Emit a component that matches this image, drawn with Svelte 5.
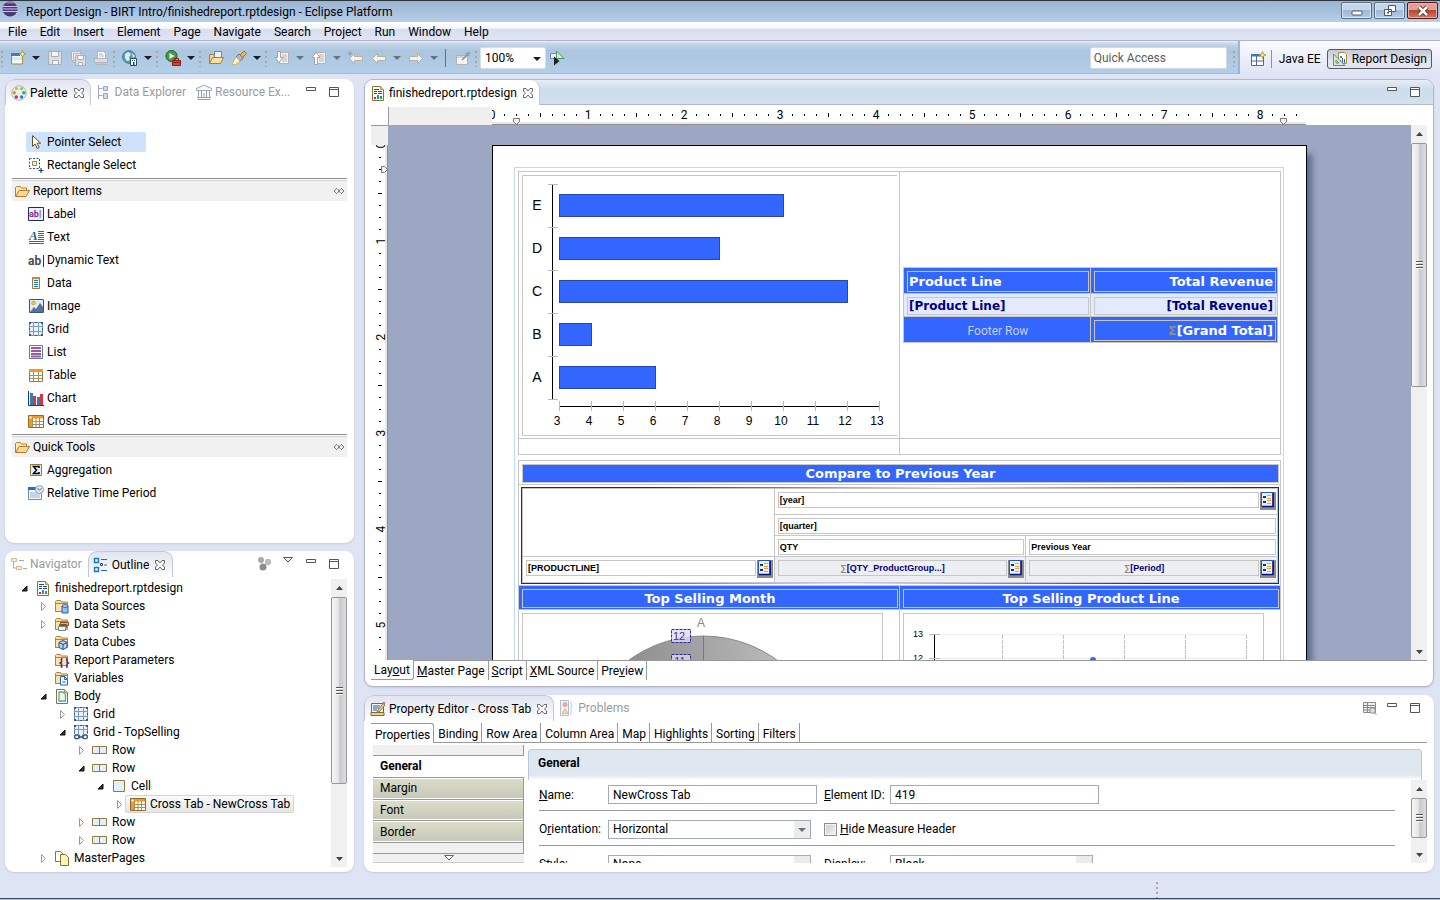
<script>
  const menus = ['File', 'Edit', 'Insert', 'Element', 'Page', 'Navigate', 'Search', 'Project', 'Run', 'Window', 'Help'];

  // kind: i = button, d = button with drop-down arrow, g = grip, s = separator
  const tools = [
    ['g'], ['d', 'new'], ['i', 'save'], ['i', 'saveall'], ['i', 'print'],
    ['g'], ['d', 'globe'],
    ['g'], ['d', 'run'],
    ['g'], ['i', 'openfolder'], ['d', 'torch'],
    ['g'], ['d', 'nextnote', true], ['d', 'prevnote', true], ['i', 'lastedit'],
    ['d', 'back', true], ['d', 'forward', true],
    ['s'], ['i', 'pin'], ['g']
  ];

  const reportItems = [
    ['label', 'Label'], ['text', 'Text'], ['dyntext', 'Dynamic Text'], ['data', 'Data'],
    ['image', 'Image'], ['grid', 'Grid'], ['list', 'List'], ['table', 'Table'],
    ['chart', 'Chart'], ['crosstab', 'Cross Tab']
  ];
  const quickTools = [['sigma', 'Aggregation'], ['time', 'Relative Time Period']];

  // depth, state, icon, label
  const tree = [
    [0, 'open', 'report', 'finishedreport.rptdesign'],
    [1, 'closed', 'dsource', 'Data Sources'],
    [1, 'closed', 'dset', 'Data Sets'],
    [1, '', 'dcube', 'Data Cubes'],
    [1, '', 'params', 'Report Parameters'],
    [1, '', 'vars', 'Variables'],
    [1, 'open', 'body', 'Body'],
    [2, 'closed', 'grid', 'Grid'],
    [2, 'open', 'gridlink', 'Grid - TopSelling'],
    [3, 'closed', 'row', 'Row'],
    [3, 'open', 'row', 'Row'],
    [4, 'open', 'cell', 'Cell'],
    [5, 'closed', 'crosstab', 'Cross Tab - NewCross Tab'],
    [3, 'closed', 'row', 'Row'],
    [3, 'closed', 'row', 'Row'],
    [1, 'closed', 'pages', 'MasterPages']
  ];
  const selectedRow = 12;

  const bars = [
    { name: 'E', value: 10 },
    { name: 'D', value: 8 },
    { name: 'C', value: 12 },
    { name: 'B', value: 4 },
    { name: 'A', value: 6 }
  ];
  const axis = [3, 4, 5, 6, 7, 8, 9, 10, 11, 12, 13];
  const hTicks = Array.from({ length: 68 }, (_, i) => i);
  const vTicks = Array.from({ length: 44 }, (_, i) => i);

  const editorTabs = [['Lay', 'o', 'ut'], ['', 'M', 'aster Page'], ['', 'S', 'cript'], ['', 'X', 'ML Source'], ['Pre', 'v', 'iew']];
  const propTabs = ['Properties', 'Binding', 'Row Area', 'Column Area', 'Map', 'Highlights', 'Sorting', 'Filters'];
  const categories = ['General', 'Margin', 'Font', 'Border'];
</script>

{#snippet folder()}
  <path d="M1.5 13V3.5l1-1h4l1 1.5h6v3" fill="#f6dfa4" stroke="#b5813a" />
  <path d="M1.5 13.5V5.5h12v8z" fill="#fbe3a6" stroke="#b5813a" />
{/snippet}

{#snippet sheet()}
  <path d="M2.5 1.5h8l3 3v11h-11z" fill="#fff" stroke="#8a7434" />
  <path d="M10.5 1.5v3h3" fill="#f0d58c" stroke="#b59445" />
{/snippet}

{#snippet gridShape()}
  <rect x="1.5" y="1.5" width="13" height="13" fill="#e8f1f8" stroke="#6f91b3" />
  <path d="M5.5 2v12M10.5 2v12M2 5.500h12M2 10.500h12" stroke="#7c9bb8" fill="none" />
  <path d="M1 1h2v2H1zM13 1h2v2h-2zM1 13h2v2H1zM13 13h2v2h-2zM1 7h1v2H1zM14 7h1v2h-1zM7 1h2v1H7zM7 14h2v1H7z" fill="#3b5678" />
{/snippet}

{#snippet icon(name)}
  <svg class="icon" width="16" height="16" viewBox="0 0 16 16" aria-hidden="true">
    {#if name === 'new'}
      <path d="M1.5 4.500h11v9.500h-11z" fill="#f4faff" stroke="#a98b3c" />
      <path d="M1 3h9v3H1z" fill="#3f7cc0" /><path d="M2 7h10v3H2z" fill="#d6e9f8" />
      <path d="M12.500.5l1 2.500 2.500 1-2.500 1-1 2.500-1-2.500-2.500-1 2.500-1z" fill="#fff3b0" stroke="#b38a1f" stroke-width=".8" />
    {:else if name === 'save'}
      <path d="M1.500 1.500h13v13h-13z" fill="#dddfe1" stroke="#a9aeb3" /><path d="M4.500 1.500h7v5h-7zM5.500 10.500h6v4h-6z" fill="#f6f6f6" stroke="#a9aeb3" />
    {:else if name === 'saveall'}
      <path d="M1.500 1.500h9v9h-9zM3.500 3.500h9v9h-9z" fill="#eceded" stroke="#b3b7bb" />
      <path d="M5.500 5.500h10v10h-10z" fill="#dddfe1" stroke="#a9aeb3" /><path d="M7.500 5.500h6v4h-6zM8.500 12.500h4v3h-4z" fill="#f6f6f6" stroke="#a9aeb3" />
    {:else if name === 'print'}
      <path d="M4.500 8V1.500h6l2 2V8" fill="#fbfbfb" stroke="#b3b7bb" />
      <path d="M1.500 8.500h13v4h-13z" fill="#dcdddd" stroke="#b3b7bb" />
      <path d="M2 14.500h12M6 4h4M6 6h5" stroke="#b3b7bb" />
    {:else if name === 'globe'}
      <circle cx="7" cy="7" r="6.300" fill="#5b9bd0" stroke="#3f6d9c" />
      <path d="M3 4l3-2 3 2-2 3 1 3-3 1-2-3zM10 3l3 3-2 2z" fill="#e5f0d2" />
      <path d="M8.500 8.500h6v7h-6z" fill="#fff" stroke="#28466e" /><path d="M10 10h1v1h-1zM12 10h1v1h-1zM11 12h1.500v3.500H11z" fill="#28466e" />
    {:else if name === 'run'}
      <circle cx="6.500" cy="6" r="5.600" fill="#3c9b46" stroke="#1f6b2a" />
      <path d="M4.500 3l5 3-5 3z" fill="#fff" />
      <path d="M7.500 10.500h8v5h-8z" fill="#d2453b" stroke="#8c1d18" /><path d="M9.500 10V8.500h4V10M7 12.500h9" fill="none" stroke="#8c1d18" />
    {:else if name === 'openfolder'}
      <path d="M1.500 13.500v-9h4l1 1.500h6v3" fill="#f7d991" stroke="#b07a28" />
      <path d="M6.500 1.500h7v6h-7z" fill="#eef4fb" stroke="#6d86ad" />
      <path d="M1.500 13.500l3-6h11l-3 6z" fill="#fbdf9c" stroke="#b07a28" />
    {:else if name === 'torch'}
      <path d="M9 5l4-4 2.500 2.500L11 8z" fill="#f5b640" stroke="#a86b1b" />
      <path d="M5 7l3-3 4.500 4L9 11z" fill="#b5b2c4" stroke="#77738d" />
      <path d="M1 14l4-7 4 4-5 4z" fill="#fff8c8" stroke="#d5b24a" />
    {:else if name === 'nextnote' || name === 'prevnote'}
      <path d="M5.500 2.500h9v11h-9z" fill="#f3f3f3" stroke="#b4b4b4" />
      <path d="M8 5h5M8 7h5M8 9h5M8 11h5" stroke="#b9b9b9" />
      {#if name === 'nextnote'}
        <path d="M3.500 1.500h3v6h2.500L5 12.500 1 7.500h2.500z" fill="#fff" stroke="#a3a3a3" />
      {:else}
        <path d="M3.500 14.500h3v-7h2.500L5 2.500 1 7.500h2.500z" fill="#fff" stroke="#a3a3a3" />
      {/if}
    {:else if name === 'back' || name === 'lastedit'}
      <path d="M1.500 8.500l5-5v3h8v4h-8v3z" fill="#f6f3ea" stroke="#b5b1a6" />
      {#if name === 'lastedit'}<path d="M2 1v5M0 3.500h4M.5 2l3 3M3.500 2l-3 3" stroke="#9d9d9d" stroke-width=".8" />{/if}
    {:else if name === 'forward'}
      <path d="M14.500 8.500l-5-5v3h-8v4h8v3z" fill="#f6f3ea" stroke="#b5b1a6" />
    {:else if name === 'pin'}
      <path d="M1.500 5.500h11v9h-11z" fill="#f5f5f3" stroke="#b3b3ae" /><path d="M2 6h10v2H2z" fill="#d4d6d6" />
      <path d="M7 10l6-6M11 3l3 3M13 2l2 2" stroke="#8d9892" stroke-width="1.600" />
    {:else if name === 'go'}
      <path d="M1.500 3.500h7v5h-7z" fill="#e9eefa" stroke="#7b86b8" />
      <path d="M7.500 1l7.500 7.500h-7.500z" fill="#d3ecd6" stroke="#4e9a5a" /><path d="M5 6.500l5.500 4.500L5 15.500z" fill="#222" />
    {:else if name === 'perspective'}
      <path d="M1.500 3.500h12v11h-12z" fill="#fff" stroke="#4d6d8f" /><path d="M1 3h10v2.500H1z" fill="#3b78b8" />
      <path d="M6.500 5v10M2 10h12" stroke="#4d6d8f" /><path d="M12.500.5l1 2.500 2.500 1-2.500 1-1 2.500-1-2.500-2.500-1 2.500-1z" fill="#ffe79a" stroke="#b38a1f" stroke-width=".8" />
    {:else if name === 'birt'}
      <path d="M6.500 1.500h6l2 2v9h-8z" fill="#fff" stroke="#b08c35" /><path d="M8 5h2v2H8z" fill="#3a86c8" /><path d="M8 9h1v3H8z" fill="#cc2b3c" /><path d="M10 7h1v5h-1zM12 8h1v4h-1z" fill="#2a6fb4" />
      <path d="M1.500 3v11.500H13zM4 9v3h3z" fill="#d9e8d4" fill-rule="evenodd" stroke="#6c8c74" />
    {:else if name === 'report'}
      {@render sheet()}
      <path d="M4 4.500h5M4 6.500h3M8 6.500h4M4 8.500h3M8 8.500h4" stroke="#174a8c" /><path d="M4 12h2v2H4z" fill="#d8233b" /><path d="M7 10h2v4H7z" fill="#2e86c8" /><path d="M10 11h2v3h-2z" fill="#2b9c55" />
    {:else if name === 'palette'}
      <circle cx="8" cy="8" r="7.300" fill="#e6eef8" stroke="#a8b7cd" />
      <circle cx="5.500" cy="3.600" r="1.700" fill="#f0b51e" /><circle cx="10.500" cy="3.600" r="1.700" fill="#9ccc3c" /><circle cx="3.200" cy="7.800" r="1.700" fill="#ef8b1e" />
      <circle cx="12.800" cy="7.800" r="1.700" fill="#48a846" /><circle cx="5.300" cy="12" r="1.700" fill="#d3332f" /><circle cx="10.600" cy="12" r="1.700" fill="#3b6fcb" />
    {:else if name === 'explorer'}
      <path d="M2.500 1v14M2.500 4.500h4M2.500 11.500h4" fill="none" stroke="#a4abb8" /><path d="M7.500 2.500h4v4h-4zM7.500 9.500h4v5h-4z" fill="#cfdcf2" stroke="#8ea6d2" />
    {:else if name === 'library'}
      <path d="M.5 6.500v-2L8 1l7.500 3.500v2z" fill="#f4f7fa" stroke="#9aa8b8" /><path d="M1.500 15.500h13M2.500 7v7M5.500 7v7M8 9v5M10.500 7v7M13.500 7v7M1 13.500h14" fill="none" stroke="#8fa0b3" />
    {:else if name === 'navigator'}
      <path d="M.5 2.500h5v3h-5zM5.500 10.500h5v3h-5z" fill="#fbe9cf" stroke="#dcb98b" /><path d="M2.500 6v6h3M8 4.500h5M12 12.500h4" fill="none" stroke="#8fb1cf" />
    {:else if name === 'outline'}
      <path d="M1.500 1.500h4v4h-4zM1.500 10.500h4v4h-4z" fill="#d9eefb" stroke="#1f77b8" stroke-width="1.400" /><path d="M8 2.500h6M8 13.500h6M11 8h3" stroke="#2b6ca8" /><path d="M7.500 6.500h2v2h-2z" fill="#fff" stroke="#1f4f86" />
    {:else if name === 'propedit'}
      <path d="M1.500 2.500h12v11h-12z" fill="#eef5fb" stroke="#7d6a35" /><path d="M3 5h7M3 7h6M3 9h4" stroke="#2e5f94" /><path d="M1 11.500h13v3H1z" fill="#e8cf8c" stroke="#7d6a35" /><path d="M7 10.500l6-8 2 1.500-6 7z" fill="#f4d183" stroke="#8a5b1d" stroke-width=".8" /><circle cx="14" cy="2" r="1.300" fill="#d9727a" />
    {:else if name === 'problems'}
      <path d="M1.500.5h8v15h-8z" fill="#f0f4fb" stroke="#aebfdd" /><circle cx="6" cy="4.500" r="2.500" fill="#f1a3a5" /><path d="M6 8.500l3 5H3z" fill="#f8d79d" stroke="#e8bb76" /><path d="M12.500 1.500l-1 2 1.500 2-1.500 3 1 3-1 3" fill="none" stroke="#b9c8e2" />
    {:else if name === 'pointer'}
      <path d="M4.500 1.500v11l2.700-2.500 2 4.500 2-1-2-4.300h3.500z" fill="#fff9e2" stroke="#5c5236" />
    {:else if name === 'rectselect'}
      <path d="M1.500 1.500h10v10h-10z" fill="none" stroke="#2f4f7f" stroke-dasharray="2 1.500" /><path d="M4.500 4.500h4v4h-4z" fill="#eef3e0" stroke="#8b8b4c" /><path d="M13 11v5M10.500 13.500h5" stroke="#1f3f74" stroke-width="1.200" />
    {:else if name === 'folder'}
      <path d="M1.500 13.500v-9l1-1h4l1 1.500h5V8" fill="#fbe9b8" stroke="#b57b35" /><path d="M1.700 13.500L5 7.500h10.500l-3.500 6z" fill="#fbd891" stroke="#b57b35" />
    {:else if name === 'label'}
      <path d="M.5 1.500h15v13H.5z" fill="#e6f2fb" stroke="#1b2b5c" /><text x="1" y="11" font-size="9" font-weight="bold" fill="#8b2e96">ab|</text>
    {:else if name === 'text'}
      <text x="1" y="11" font-size="13" font-style="italic" font-weight="bold" font-family="Liberation Serif, serif" fill="#1e5f9c">A</text><path d="M10 2.500h6M10 4.500h6M10 6.500h6M10 8.500h6M10 10.500h6M1 12.500h15M1 14.500h15" stroke="#2d6aa3" />
    {:else if name === 'dyntext'}
      <text x="0" y="13" font-size="12" font-weight="bold" fill="#4d4d4d">ab</text><path d="M15.500 3v12" stroke="#333" />
    {:else if name === 'data'}
      <path d="M4.500 2.500h7v11h-7z" fill="#e6f5fd" stroke="#9b7e3c" /><path d="M4 2h8v2H4z" fill="#d97f22" /><path d="M6 5.500h4M6 7.500h4M6 9.500h4M6 11.500h4" stroke="#2477b8" />
    {:else if name === 'image'}
      <path d="M1.500 1.500h14v13h-14z" fill="#dcecfb" stroke="#3c577f" /><path d="M2 14l4-5 2 2 4-6 3 4v5z" fill="#56729c" /><circle cx="5.500" cy="5" r="1.800" fill="#f8cf4d" stroke="#c5851d" stroke-width=".7" />
    {:else if name === 'grid'}
      {@render gridShape()}
    {:else if name === 'gridlink'}
      {@render gridShape()}
      <path d="M1 10h14v6H1z" fill="#e8eef6" /><g fill="none" stroke="#33527e" stroke-width="1.300"><rect x="1.500" y="11" width="5" height="3.600" rx="1.800" /><rect x="9.500" y="11" width="5" height="3.600" rx="1.800" /><path d="M5 13h6" /></g>
    {:else if name === 'list'}
      <path d="M1.500 1.500h13v13h-13z" fill="#fff" stroke="#5f7fa5" /><path d="M3 4h10M3 7h10M3 10h10M3 12.500h10" stroke="#9b59a6" stroke-width="2" />
    {:else if name === 'table'}
      <path d="M1.500 2.500h13v12h-13z" fill="#fff" stroke="#927c3d" /><path d="M1 2h14v3H1z" fill="#ee9a1d" /><path d="M5.500 5v9M10.500 5v9M2 8.500h12M2 11.500h12" stroke="#a58f55" />
    {:else if name === 'chart'}
      <path d="M.5 1v14.500H16" fill="none" stroke="#1d3c63" /><path d="M2 3h3v12H2zM9 7h3v8H9z" fill="#2c7fb9" /><path d="M5 6h3v9H5zM12 4h3v11h-3z" fill="#d9333f" />
    {:else if name === 'crosstab'}
      <path d="M.5 2.500h15v12H.5z" fill="#fff" stroke="#8d6b2e" /><path d="M1 3h14v2.500H4V14H1z" fill="#f09a20" /><path d="M4.500 5v9M8 5v9M11.500 5v9M4 8.500h11M4 11.500h11" stroke="#a58f55" /><path d="M1.500 3.500h2v2h-2z" fill="#fff" />
    {:else if name === 'sigma'}
      <path d="M2.500 2.500h11v11h-11z" fill="#e4effa" stroke="#93793a" /><path d="M11 6V4.500H5.500L8.500 8l-3 3.500H11V10" fill="none" stroke="#000" stroke-width="1.500" />
    {:else if name === 'time'}
      <path d="M.5 2.500h13v12H.5z" fill="#f2f7fc" stroke="#6c8fb0" /><path d="M0 2h12v3H0z" fill="#2672b8" /><path d="M2.500 8h9M2.500 10h9M2.500 12h9" stroke="#4a6f95" stroke-dasharray="1 1" /><circle cx="11.500" cy="4.500" r="4" fill="#dde8ef" stroke="#8ea5b5" /><path d="M9.500 3.500l2 1.500 2-1.500" fill="none" stroke="#47637b" />
    {:else if name === 'dsource'}
      {@render folder()}<path d="M8 8h6v7H8z" fill="#8fc1ec" stroke="#2b62a4" /><ellipse cx="11" cy="8" rx="3" ry="1.300" fill="#d6ebfb" stroke="#2b62a4" />
    {:else if name === 'dset'}
      {@render folder()}<path d="M6.500 6.500h8v3h-8zM5.500 8.500h7v3h-7z" fill="#e8b384" stroke="#8a4d2a" /><path d="M4.500 10.500h7v4h-7z" fill="#eaf6ee" stroke="#6f8c8b" />
    {:else if name === 'dcube'}
      {@render folder()}<path d="M9 6.500l4 2v5l-4 2-4-2v-5z" fill="#b9d3f3" stroke="#24508e" /><path d="M5 8.500l4 2 4-2M9 10.500v5" fill="none" stroke="#24508e" />
    {:else if name === 'params'}
      {@render folder()}<path d="M8.500 7H7.500v3l-1.500 1 1.500 1v3h1M12 7h1v3l1.500 1-1.500 1v3h-1" fill="none" stroke="#4a2a8c" stroke-width="1.500" />
    {:else if name === 'vars'}
      {@render folder()}<path d="M6.500 6.500h4l3 3v5.500H6.500z" fill="#edf6fe" stroke="#2b66ad" /><path d="M10.500 6.500v3h3M8.500 12h3" fill="none" stroke="#2b66ad" />
    {:else if name === 'body'}
      {@render sheet()}<path d="M5 4h4l2.500 2.500v6.500H5z" fill="#fff9b8" stroke="#43a6dd" stroke-width="1.300" />
    {:else if name === 'row'}
      <path d="M.5 4.500h14v7H.5zM7.500 4.500v7" fill="#e3effa" stroke="#93793a" />
    {:else if name === 'cell'}
      <path d="M2.500 2.500h11v11h-11z" fill="#e3effa" stroke="#93793a" />
    {:else if name === 'pages'}
      <path d="M1.500 1.500h5l3 3v7h-8z" fill="#fff" stroke="#8a7434" /><path d="M6.500 4.500h5l3 3v8h-8z" fill="#fdf3b5" stroke="#8a7434" />
    {:else if name === 'dots'}
      <circle cx="4" cy="4" r="3" fill="#a8a8a8" /><circle cx="11" cy="6" r="3.200" fill="#bcbcbc" /><circle cx="6" cy="11" r="3.500" fill="#8d8d8d" />
    {:else if name === 'filter'}
      <path d="M2.500 2.500h12v10h-12zM2.500 5.500h12M2.500 7.500h12M2.500 10h12M6.500 2.500v10" fill="#eee" stroke="#8a8a8a" /><circle cx="11.500" cy="10.500" r="2.800" fill="#ddd" stroke="#8a8a8a" /><path d="M13.500 13l2 2" stroke="#8a8a8a" />
    {:else if name === 'min'}
      <path d="M3.500 3.500h9v3h-9z" fill="#fff" stroke="#555" />
    {:else if name === 'max'}
      <path d="M3.500 3.500h9v9h-9zM3.500 5.500h9" fill="#fff" stroke="#555" />
    {:else if name === 'viewmenu'}
      <path d="M3.500 1.500h9l-4.500 4.500z" fill="#fff" stroke="#555" />
    {:else if name === 'close'}
      <path d="M3.500 3.500h2.500l2 2.500 2-2.500h2.500v2.500l-2 2 2 2v2.500H10l-2-2.500-2 2.500H3.500V10l2-2-2-2z" fill="#fff" stroke="#666" />
    {:else if name === 'eclipse'}
      <circle cx="8" cy="8" r="7.500" fill="#4b3a78" /><path d="M1 5.500h14M.5 8h15M1 10.500h14" stroke="#cfc5e6" stroke-width="1.200" /><path d="M3 2.500a7.500 7.500 0 0 1 10 0z" fill="#8d7bb8" />
    {/if}
  </svg>
{/snippet}

{#snippet scrollbar(thumbClass)}
  <div class="scrollbar">
    <svg width="16" height="18" viewBox="0 0 16 18"><path d="M5 11l3.500-4 3.500 4z" fill="#444" /></svg>
    <div class="thumb {thumbClass}"><i></i><i></i><i></i></div>
    <svg class="down" width="16" height="18" viewBox="0 0 16 18"><path d="M5 8l3.500 4L12 8z" fill="#444" /></svg>
  </div>
{/snippet}

{#snippet dropArrow(faded)}
  <svg class="droparrow" width="14" height="16" viewBox="0 0 14 16"><path d="M3 6h8l-4 4z" fill={faded ? '#667380' : '#1c1c1c'} /></svg>
{/snippet}

{#snippet groupIcon()}
  <svg class="icon" width="16" height="18" viewBox="0 0 16 18">
    <path d="M0 0h16v18H0z" fill="#8b8b8b" />
    <path d="M1.500.5h12v14h-12z" fill="#e9f1fb" stroke="#2a55b0" /><path d="M13 1v13.500H2" fill="none" stroke="#0a1380" stroke-width="1.600" />
    <path d="M3 4h3v2H3zM3 9h3v2H3z" fill="#1a2f8c" /><path d="M7 3.500h4M7 6.500h4M7 8.500h4M7 11.500h4" stroke="#f0a030" />
  </svg>
{/snippet}

<div class="window">
  <header class="titlebar">
    {@render icon('eclipse')}
    <span class="title">Report Design - BIRT Intro/finishedreport.rptdesign - Eclipse Platform</span>
    <div class="winbuttons">
      <button aria-label="Minimize"><svg width="14" height="12" viewBox="0 0 14 12"><rect x="2" y="6" width="10" height="4" rx="1" fill="#fff" stroke="#4d5a6b" /></svg></button>
      <button aria-label="Restore"><svg width="14" height="12" viewBox="0 0 14 12"><path d="M5.500.5h7v6h-7zM1.500 4.500h7v6h-7z" fill="#fff" stroke="#4d5a6b" /><path d="M4 7h2v1.500H4z" fill="#4d5a6b" /></svg></button>
      <button class="red" aria-label="Close"><svg width="14" height="12" viewBox="0 0 14 12"><path d="M3 2l8 8M11 2l-8 8" stroke="#5a2a2a" stroke-width="4.500" /><path d="M3 2l8 8M11 2l-8 8" stroke="#fff" stroke-width="2.500" /></svg></button>
    </div>
  </header>

  <nav class="menubar">
    {#each menus as m}<button>{m}</button>{/each}
  </nav>

  <div class="toolbar">
    <div class="coolbar">
      {#each tools as [kind, name, faded]}
        {#if kind === 'g'}
          <span class="grip"></span>
        {:else if kind === 's'}
          <span class="sep"></span>
        {:else}
          <button class="tool" aria-label={name}>{@render icon(name)}</button>
          {#if kind === 'd'}{@render dropArrow(faded)}{/if}
        {/if}
      {/each}
      <span class="zoom">
        <select aria-label="Zoom"><option>100%</option></select>
        {@render dropArrow(false)}
      </span>
      <button class="tool go" aria-label="Go">{@render icon('go')}</button>
      <input class="quick" type="text" placeholder="Quick Access" aria-label="Quick Access" />
      <span class="grip"></span>
    </div>
    <div class="perspectives">
      <button class="tool" aria-label="Open perspective">{@render icon('perspective')}</button>
      <span class="sep"></span>
      <button class="persp">Java EE</button>
      <button class="persp active">{@render icon('birt')}Report Design</button>
    </div>
  </div>

  <main>
    <div class="left">
      <section class="panel palette">
        <div class="tabs">
          <button class="tab active">{@render icon('palette')}Palette{@render icon('close')}</button>
          <button class="tab">{@render icon('explorer')}Data Explorer</button>
          <button class="tab">{@render icon('library')}Resource Ex...</button>
          <div class="actions">{@render icon('min')}{@render icon('max')}</div>
        </div>
        <div class="palettebody">
          <button class="item selected">{@render icon('pointer')}Pointer Select</button>
          <button class="item">{@render icon('rectselect')}Rectangle Select</button>
          {#each [['Report Items', reportItems], ['Quick Tools', quickTools]] as [title, items]}
            <h3>
              {@render icon('folder')}{title}
              <svg class="pinned" width="12" height="10" viewBox="0 0 12 10"><path d="M4 2L1 5l3 3M8 2l3 3-3 3M4.500 3l3 4M7.500 3l-3 4" fill="none" stroke="#777" /></svg>
            </h3>
            {#each items as [ic, label]}
              <button class="item">{@render icon(ic)}{label}</button>
            {/each}
          {/each}
        </div>
      </section>

      <section class="panel">
        <div class="tabs outlinetabs">
          <button class="tab">{@render icon('navigator')}Navigator</button>
          <button class="tab active">{@render icon('outline')}Outline{@render icon('close')}</button>
          <div class="actions">{@render icon('dots')}{@render icon('viewmenu')}{@render icon('min')}{@render icon('max')}</div>
        </div>
        <div class="treewrap">
          <ul class="tree">
            {#each tree as [depth, state, ic, label], i}
              <li style:--depth={depth}>
                <svg width="12" height="12" viewBox="0 0 12 12">
                  {#if state === 'open'}<path d="M9 4v5H4z" fill="#333" stroke="#111" />{/if}
                  {#if state === 'closed'}<path d="M4.500 2.500v8l4-4z" fill="#fff" stroke="#999" />{/if}
                </svg>
                <span class="node" class:selected={i === selectedRow}>{@render icon(ic)}{label}</span>
              </li>
            {/each}
          </ul>
          {@render scrollbar('treethumb')}
        </div>
      </section>
    </div>

    <div class="right">
      <section class="panel editor">
        <div class="tabs editortabs">
          <button class="tab active">{@render icon('report')}finishedreport.rptdesign{@render icon('close')}</button>
          <div class="actions">{@render icon('min')}{@render icon('max')}</div>
        </div>

        <div class="design">
          <div class="hruler">
            <div class="offpage"></div>
            <svg width="816" height="18" viewBox="0 0 816 18">
              <rect width="816" height="18" fill="#fff" />
              <path d="M0 16h814" stroke="#e9e9e9" stroke-width="2" /><path d="M0 17.500h814" stroke="#8f8f8f" />
              {#each hTicks as t}
                {#if t % 8 === 0}
                  <text x={t * 12} y="12" text-anchor="middle">{t / 8}</text>
                {:else}
                  <rect x={t * 12} y={t % 4 ? 7 : 6} width="1" height={t % 4 ? 2 : 4} />
                {/if}
              {/each}
              <path d="M21.500 11.500h6v3l-3 3-3-3zM788.500 11.500h6v3l-3 3-3-3z" fill="#f4f4f4" stroke="#777" />
            </svg>
          </div>
          <div class="vruler">
            <div class="offpage"></div>
            <svg width="17" height="524" viewBox="0 0 17 524">
              <path d="M15 0v524" stroke="#e9e9e9" stroke-width="2" /><path d="M16.500 0v524" stroke="#8f8f8f" />
              {#each vTicks as t}
                {#if t % 8 === 0}
                  <text transform="rotate(-90)" x={-t * 12} y="14" text-anchor="middle">{t / 8}</text>
                {:else}
                  <rect x={t % 4 ? 8 : 7} y={t * 12} width={t % 4 ? 2 : 4} height="1" />
                {/if}
              {/each}
              <path d="M10.500 21.500v6h3l3-3-3-3z" fill="#f4f4f4" stroke="#777" />
            </svg>
          </div>

          <div class="canvas">
            <div class="page">
              <div class="margins">
                <table class="layout first">
                  <tbody>
                    <tr class="tall">
                      <td>
                        <svg class="barchart" width="375" height="261" viewBox="0 0 375 261">
                          <path d="M375 .5H.5v260H375" fill="none" stroke="#c6c6c6" />
                          <path d="M30.500 9v216M37 231.500h321" stroke="#000" fill="none" />
                          {#each [0, 1, 2, 3, 4, 5] as n}<path d="M26 {9.5 + n * 43}h10" stroke="#b9b9b9" />{/each}
                          {#each bars as b, n}
                            <text x="15" y={35 + n * 43} text-anchor="middle">{b.name}</text>
                            <rect x="37.500" y={19.5 + n * 43} width={(b.value - 3) * 32} height="22" fill="#3366ff" stroke="#2447b2" />
                          {/each}
                          {#each axis as a, n}
                            <path d="M{37.5 + n * 32} 226v10" stroke="#b9b9b9" />
                            <text class="num" x={35 + n * 32} y="250" text-anchor="middle">{a}</text>
                          {/each}
                        </svg>
                      </td>
                      <td class="mid">
                        <table class="product">
                          <tbody>
                            <tr class="head"><th><div class="field">Product Line</div></th><th><div class="field end">Total Revenue</div></th></tr>
                            <tr class="detail"><td><div class="field">[Product Line]</div></td><td><div class="field end">[Total Revenue]</div></td></tr>
                            <tr class="head"><td class="footer">Footer Row</td><td><div class="field end"><em>Σ</em>[Grand Total]</div></td></tr>
                          </tbody>
                        </table>
                      </td>
                    </tr>
                    <tr class="blank"><td></td><td></td></tr>
                  </tbody>
                </table>

                <table class="layout">
                  <tbody>
                    <tr class="band"><td colspan="2"><div class="field solid">Compare to Previous Year</div></td></tr>
                    <tr>
                      <td colspan="2" class="crosscell">
                        <div class="selection">
                          <table class="cross">
                            <tbody>
                              <tr class="high"><td rowspan="3"></td><td colspan="2"><div class="fieldrow"><div class="field">[year]</div>{@render groupIcon()}</div></td></tr>
                              <tr><td colspan="2"><div class="field">[quarter]</div></td></tr>
                              <tr><td><div class="field">QTY</div></td><td><div class="field">Previous Year</div></td></tr>
                              <tr class="high">
                                <td><div class="fieldrow"><div class="field">[PRODUCTLINE]</div>{@render groupIcon()}</div></td>
                                <td class="measure"><div class="fieldrow"><div class="field"><em>∑</em>[QTY_ProductGroup...]</div>{@render groupIcon()}</div></td>
                                <td class="measure"><div class="fieldrow"><div class="field"><em>∑</em>[Period]</div>{@render groupIcon()}</div></td>
                              </tr>
                            </tbody>
                          </table>
                        </div>
                      </td>
                    </tr>
                    <tr class="band blue"><td><div class="field">Top Selling Month</div></td><td><div class="field">Top Selling Product Line</div></td></tr>
                    <tr>
                      <td>
                        <svg class="lower" width="361" height="280" viewBox="0 0 361 280">
                          <defs><linearGradient id="dial"><stop offset="0" stop-color="#808080" /><stop offset="1" stop-color="#c8c8c8" /></linearGradient></defs>
                          <rect x=".5" y=".5" width="360" height="279" fill="#fff" stroke="#c6c6c6" />
                          <text x="179" y="14" text-anchor="middle" fill="#888" font-size="12">A</text>
                          <circle cx="181" cy="149" r="126" fill="url(#dial)" stroke="#8a8a8a" />
                          <path d="M181.500 23v126" stroke="#777" />
                          <g fill="#ddddec" fill-opacity=".75" stroke="#2c2c9c" stroke-dasharray="3 1"><rect x="149.500" y="16.500" width="19" height="13" /><rect x="149.500" y="41.500" width="19" height="13" /></g>
                          <g fill="#4c2ba8" font-size="11" text-anchor="middle"><text x="157" y="27">12</text><text x="158" y="52">11</text></g>
                        </svg>
                      </td>
                      <td>
                        <svg class="lower" width="361" height="280" viewBox="0 0 361 280">
                          <rect x=".5" y=".5" width="360" height="279" fill="#fff" stroke="#c6c6c6" />
                          <path d="M38 21.500h306M38 45.500h306" stroke="#eee" />
                          {#each [0, 1, 2, 3, 4] as n}<path d="M{99.5 + n * 61} 22v240" stroke="#c2c2c2" stroke-dasharray="4 1" />{/each}
                          <path d="M31.500 21v240" stroke="#000" /><path d="M26 21.500h11M26 45.500h11" stroke="#b9b9b9" />
                          <g font-size="9" text-anchor="end"><text x="20" y="24">13</text><text x="20" y="48">12</text></g>
                          <circle cx="190" cy="47" r="3" fill="#3366ff" />
                        </svg>
                      </td>
                    </tr>
                  </tbody>
                </table>
              </div>
            </div>
          </div>
          {@render scrollbar('editorthumb')}
        </div>

        <div class="pagetabs">
          {#each editorTabs as [pre, key, post], i}
            <button class:active={i === 0}>{pre}<u>{key}</u>{post}</button>
          {/each}
        </div>
      </section>

      <section class="panel properties">
        <div class="tabs">
          <button class="tab active">{@render icon('propedit')}Property Editor - Cross Tab{@render icon('close')}</button>
          <button class="tab">{@render icon('problems')}Problems</button>
          <div class="actions">{@render icon('filter')}{@render icon('min')}{@render icon('max')}</div>
        </div>
        <div class="proptabs">
          {#each propTabs as t, i}<button class:active={i === 0}>{t}</button>{/each}
        </div>
        <div class="propbody">
          <div class="cats">
            <div class="filler"></div>
            {#each categories as c, i}<button class:active={i === 0}>{c}</button>{/each}
            <div class="filler"></div>
            <div class="more"><svg width="12" height="8" viewBox="0 0 12 8"><path d="M1.500 1.500h9L6 6z" fill="#fff" stroke="#666" /></svg></div>
          </div>
          <div class="details">
            <h2>General</h2>
            <div class="formwrap">
              <form>
                <div class="formrow">
                  <label for="name"><u>N</u>ame:</label>
                  <input id="name" type="text" value="NewCross Tab" />
                  <label class="second" for="element-id"><u>E</u>lement ID:</label>
                  <input id="element-id" type="text" value="419" />
                </div>
                <div class="formrow">
                  <label for="orientation">O<u>r</u>ientation:</label>
                  <span class="combo"><select id="orientation"><option>Horizontal</option></select>{@render dropArrow(true)}</span>
                  <label class="second check"><input type="checkbox" /><span><u>H</u>ide Measure Header</span></label>
                </div>
                <div class="formrow">
                  <label for="style">St<u>y</u>le:</label>
                  <span class="combo"><select id="style"><option>None</option></select>{@render dropArrow(true)}</span>
                  <label class="second" for="display"><u>D</u>isplay:</label>
                  <span class="combo"><select id="display"><option>Block</option></select>{@render dropArrow(true)}</span>
                </div>
              </form>
              {@render scrollbar('formthumb')}
            </div>
          </div>
        </div>
      </section>
    </div>
  </main>

  <footer><span class="grip"></span></footer>
</div>

<style>
  :global(body) {
    background: #dfe4f5;
  }

  .window {
    display: flex;
    flex-direction: column;
    height: 100vh;
    min-height: 800px;
    min-width: 1280px;
    overflow: hidden;
    background: #dfe4f5;
    color: #000;
    font: 12px/16px Roboto, "Open Sans", sans-serif;
  }

  .window * {
    box-sizing: border-box;
  }

  button, input, select {
    margin: 0;
    padding: 0;
    border: 0;
    border-radius: 0;
    background: none;
    color: inherit;
    font: inherit;
    appearance: none;
  }

  h2, h3, ul {
    margin: 0;
    padding: 0;
    font-size: 12px;
    font-weight: normal;
  }

  svg {
    display: block;
    flex: none;
  }

  /* Window frame */
  .titlebar {
    display: flex;
    align-items: center;
    height: 22px;
    padding-left: 2px;
    border-top: 1px solid #30363e;
    background: linear-gradient(#9ab4d2, #b6cee8);
  }
  .titlebar > .icon {
    align-self: flex-start;
  }
  .title {
    flex: 1;
    padding-left: 8px;
  }
  .winbuttons {
    display: flex;
    gap: 2px;
    align-self: flex-start;
    padding: 1px 2px 0 0;
  }
  .winbuttons button {
    display: flex;
    align-items: center;
    justify-content: center;
    width: 31px;
    height: 17px;
    border: 1px solid #576e8c;
    border-radius: 2px;
    background: linear-gradient(#c5d6ea 50%, #9fb8d4 50%, #b5cbe3);
    box-shadow: inset 0 0 0 1px #d8e5f3;
  }
  .winbuttons .red {
    border-color: #531a1a;
    background: linear-gradient(#e0a093 50%, #bd4330 50%, #cf7a64);
    box-shadow: inset 0 0 0 1px #e8b4aa;
  }

  .menubar {
    display: flex;
    height: 19px;
    padding: 2px 0 0 2px;
    border-bottom: 1px solid #b0b4cb;
    background: linear-gradient(#fff, #f4f6fc 35%, #d8deef 40%, #e0e5f6);
  }
  .menubar button {
    padding: 0 7px 0 6px;
  }

  .toolbar {
    display: flex;
    height: 33px;
    background: linear-gradient(#fafbfe, #dfe4f5);
  }
  .coolbar {
    display: flex;
    flex: 1;
    align-items: center;
    padding-top: 2px;
    border-bottom: 1px solid #a5bbd6;
    background: linear-gradient(#e8eef8, #c3d5ea 3px, #acc6e0 10px, #b3cee8);
  }
  .tool {
    display: flex;
    justify-content: center;
    width: 23px;
  }
  .tool.go {
    width: 20px;
  }
  .grip {
    flex: none;
    width: 6px;
    height: 17px;
    background: radial-gradient(circle at 2px 2px, #aaa69c 1px, transparent 1px) 0 0 / 6px 5px;
  }
  .sep {
    width: 1px;
    height: 18px;
    margin: 0 5px 0 4px;
    background: #5e7187;
  }
  .zoom {
    display: flex;
    position: relative;
    width: 66px;
    height: 22px;
    margin-right: 1px;
    border: 1px solid #d5dfec;
    border-radius: 2px;
    background: #fff;
  }
  .zoom select {
    width: 100%;
    padding-left: 4px;
    outline: 0;
  }
  .zoom .droparrow {
    position: absolute;
    right: 1px;
    top: 3px;
    pointer-events: none;
  }
  .quick {
    width: 137px;
    height: 22px;
    margin: 0 5px 0 auto;
    padding: 0 3px;
    border: 1px solid #d0dbe9;
    border-radius: 2px;
    background: #fff;
  }
  .quick::placeholder {
    color: #5c5c5c;
  }
  .perspectives {
    display: flex;
    align-items: center;
    padding: 3px 8px 0 7px;
    border-left: 2px solid #9db5d1;
  }
  .perspectives .sep {
    margin: 0 4px 0 1px;
    background: #8b90a0;
  }
  .persp {
    display: flex;
    align-items: center;
    height: 20px;
    padding: 0 3px;
  }
  .persp + .persp {
    margin-left: 3px;
  }
  .persp.active {
    gap: 4px;
    padding: 0 4px;
    border: 1px solid #55585f;
    border-radius: 3px;
    background: linear-gradient(#c6c9d5, #e3e6f1 60%);
  }

  main {
    display: flex;
    flex: 1;
    gap: 10px;
    min-height: 0;
    padding: 5px 6px 0 5px;
  }
  .left, .right {
    display: flex;
    flex-direction: column;
    gap: 8px;
    min-width: 0;
    min-height: 0;
  }
  .left {
    flex: 0 0 349px;
  }
  .right {
    flex: 1;
  }

  footer {
    display: flex;
    justify-content: flex-end;
    align-items: flex-end;
    height: 28px;
    padding: 0 279px 1px 0;
    border-bottom: 1px solid #a9c0d8;
    box-shadow: inset 0 -1px #3c4a5c;
  }

  /* Panels and tabs */
  .panel {
    flex: none;
    border-radius: 9px;
    background: #fff;
    box-shadow: 0 1px 2px #c5c9dc;
    overflow: hidden;
  }
  .tabs {
    display: flex;
    height: 26px;
  }
  .tab {
    display: flex;
    align-items: center;
    gap: 3px;
    height: 26px;
    padding: 0 5px;
    color: #969ba5;
    white-space: nowrap;
  }
  .tab.active {
    padding: 0 3px 0 5px;
    border: 1px solid #c3c7da;
    border-bottom: 0;
    border-radius: 9px 9px 0 0;
    background: linear-gradient(#e2e5f0, #fff);
    color: #000;
  }
  .actions {
    display: flex;
    gap: 7px;
    margin-left: auto;
    padding: 5px 12px 0 0;
  }
  .right .actions {
    padding-right: 11px;
  }
  .outlinetabs {
    height: 28px;
  }
  .outlinetabs .tab {
    padding: 0 6px;
  }
  .outlinetabs .active {
    padding: 0 4px;
  }

  .scrollbar {
    display: flex;
    flex: none;
    flex-direction: column;
    width: 16px;
    background: #f0f0f0;
  }
  .scrollbar .down {
    margin-top: auto;
  }
  .thumb {
    display: flex;
    flex-direction: column;
    align-items: center;
    justify-content: center;
    gap: 1px;
    border: 1px solid #979797;
    border-radius: 2px;
    background: linear-gradient(90deg, #f7f7f7, #e6e6e8 45%, #c9cacf 55%, #dcdce0);
  }
  .thumb i {
    width: 7px;
    height: 2px;
    border-top: 1px solid #555;
    background: #fff;
  }
  .treethumb {
    height: 187px;
  }
  .editorthumb {
    height: 244px;
  }
  .formthumb {
    height: 40px;
  }

  /* Palette */
  .palette {
    flex: 1;
  }
  .palettebody {
    padding: 25px 7px 0;
  }
  .item {
    display: flex;
    align-items: center;
    gap: 3px;
    height: 23px;
    padding-left: 16px;
  }
  .item.selected {
    width: 120px;
    height: 20px;
    margin: 2px 0 1px 14px;
    padding-left: 2px;
    border-radius: 2px;
    background: #cfe2fb;
  }
  h3 {
    display: flex;
    align-items: center;
    gap: 3px;
    height: 23px;
    margin: 2px 0 1px;
    padding: 2px 2px 0;
    border-top: 1px solid #8f8f8f;
    background: linear-gradient(#fff 1px, #d5d5d5 1px, #d5d5d5 2px, #f1f1f1 2px);
  }
  .pinned {
    margin-left: auto;
  }

  /* Outline */
  .treewrap {
    display: flex;
    padding: 0 7px 5px;
  }
  .tree {
    flex: 1;
    list-style: none;
  }
  li {
    display: flex;
    align-items: center;
    height: 18px;
    padding-left: calc(6px + 19px * var(--depth));
  }
  .node {
    display: flex;
    align-items: center;
    gap: 4px;
    height: 18px;
    padding: 0 3px 0 4px;
    border: 1px solid transparent;
    border-radius: 2px;
  }
  .node.selected {
    border-color: #d5d5d5;
    background: linear-gradient(#fafafa, #e6e6e6);
  }

  /* Editor */
  .editor {
    display: flex;
    flex: 1;
    flex-direction: column;
    min-height: 0;
    border: 1px solid #b2b7cd;
  }
  .editortabs {
    height: 25px;
    margin-bottom: 2px;
    border-bottom: 1px solid #b2b7cd;
    background: linear-gradient(#e6eef6, #cddceb 40%, #d3e1ee);
  }
  .editortabs .tab.active {
    height: 25px;
    padding-left: 5px;
    border-width: 0 1px 0 0;
    background: #fff;
  }
  .right .editortabs .actions {
    padding: 4px 10px 0 0;
  }
  .design {
    display: grid;
    flex: 1;
    grid-template: 18px minmax(0, 1fr) / 17px minmax(0, 1fr) 16px;
    min-height: 0;
    padding: 0 6px;
  }
  .hruler {
    grid-column: 2 / 4;
    display: flex;
    overflow: hidden;
  }
  .hruler .offpage {
    flex: none;
    width: 104px;
    border-left: 1px solid #999;
    background: #efefef;
  }
  .vruler {
    grid-column: 1;
    overflow: hidden;
  }
  .vruler .offpage {
    height: 20px;
    border-top: 1px solid #999;
    background: #efefef;
  }
  .hruler text, .vruler text {
    font-size: 12px;
  }
  .canvas {
    padding: 20px 0 0 104px;
    background: #9da6c3;
    overflow: hidden;
  }
  .page {
    width: 815px;
    padding: 21px 22px 21px 21px;
    border: 1px solid #000;
    background: #fff;
    box-shadow: 6px 8px 6px -1px #566b90;
  }
  .margins {
    padding: 3px;
    border: 1px solid #c3dcec;
  }

  .layout {
    width: 763px;
    border-collapse: collapse;
    table-layout: fixed;
  }
  .layout.first {
    margin-bottom: 5px;
  }
  td, th {
    padding: 3px 1px 1px 3px;
    border: 1px solid #c6c6c6;
    vertical-align: top;
    text-align: left;
  }
  .tall {
    height: 267px;
  }
  .blank {
    height: 16px;
  }
  .mid {
    vertical-align: middle;
  }
  .barchart {
    font: 14px "Liberation Sans", Arial, sans-serif;
  }
  .barchart .num {
    font-size: 12px;
  }
  .lower {
    font-family: "Liberation Sans", Arial, sans-serif;
  }

  .field {
    border: 1px solid #c6c6c6;
    padding: 0 1px;
    white-space: nowrap;
  }
  .field.end {
    padding: 0 2px;
    text-align: right;
  }
  .field em {
    color: #8c8c8c;
    font-style: normal;
  }

  .product {
    width: 375px;
    margin-bottom: 2px;
    border-collapse: collapse;
    table-layout: fixed;
    font: bold 12px/16px "DejaVu Sans", Verdana, sans-serif;
  }
  .product .head {
    height: 26px;
    background: #3366ff;
    color: #fff;
    font-size: 13px;
  }
  .product .head .field {
    height: 21px;
    line-height: 19px;
  }
  .product .detail {
    height: 23px;
    background: #e4eafd;
    color: #00007f;
  }
  .product .detail .field {
    height: 18px;
  }
  .product .footer {
    color: #c3cfee;
    font: 12px/18px Roboto, sans-serif;
    text-align: center;
    vertical-align: middle;
  }

  .band {
    height: 24px;
  }
  .band .field {
    height: 19px;
    color: #fff;
    font: bold 13px/17px "DejaVu Sans", Verdana, sans-serif;
    text-align: center;
  }
  .band .solid, .blue {
    background: #3366ff;
  }
  .crosscell {
    padding: 2px 1px 1px 2px;
  }
  .selection {
    padding: 1px;
    background: linear-gradient(135deg, #13306b 15%, #e8ebf1 50%, #13306b 85%);
  }
  .cross {
    width: 100%;
    border-collapse: collapse;
    table-layout: fixed;
    background: #fff;
    font: bold 9px/14px "Liberation Sans", Arial, sans-serif;
  }
  .cross tr {
    height: 21px;
  }
  .cross .high {
    height: 26px;
  }
  .cross .field {
    height: 16px;
  }
  .fieldrow {
    display: flex;
    align-items: center;
    gap: 1px;
  }
  .fieldrow .field {
    flex: 1;
    align-self: flex-start;
  }
  .measure {
    background: #eeeff2;
    color: #00007f;
    text-align: center;
  }

  .pagetabs {
    display: flex;
    margin: 0 6px 6px;
    border-top: 1px solid #999;
  }
  .pagetabs button {
    height: 19px;
    padding: 0 3px;
    border-right: 1px solid #999;
  }
  .pagetabs .active {
    margin-top: -1px;
    height: 20px;
    border-bottom: 1px solid #999;
    border-radius: 0 0 3px 0;
    background: #fff;
  }

  /* Property editor */
  .proptabs {
    display: flex;
    margin: 2px 7px 2px;
    border-bottom: 1px solid #999;
  }
  .proptabs button {
    height: 19px;
    padding: 2px 3px 0 4px;
    border-right: 1px solid #999;
  }
  .proptabs .active {
    height: 20px;
    margin-bottom: -1px;
    border-top: 1px solid #999;
    border-radius: 0 3px 0 0;
    background: #fff;
  }
  .propbody {
    display: flex;
    gap: 4px;
    height: 118px;
    margin: 0 7px 9px 9px;
    overflow: hidden;
  }
  .cats {
    display: flex;
    flex-direction: column;
    width: 151px;
  }
  .cats .filler {
    height: 11px;
    border: 1px solid #999;
    border-width: 0 1px 1px 0;
    background: #f0f0f0;
  }
  .cats button {
    height: 22px;
    padding: 0 7px;
    border: 1px solid #999;
    border-width: 0 1px 1px 0;
    background: linear-gradient(#dcddca, #c6c7b6);
    box-shadow: inset 0 1px #fff, inset 0 -1px #fff;
    text-align: left;
  }
  .cats .active {
    border-right: 0;
    background: #fff;
    font-weight: bold;
  }
  .more {
    display: flex;
    justify-content: center;
    height: 9px;
    border-bottom: 1px solid #ccc;
    background: #f0f0f0;
  }
  .details {
    flex: 1;
    min-width: 0;
    margin-top: 4px;
  }
  h2 {
    height: 31px;
    margin-right: 5px;
    padding: 5px 9px;
    border: 1px solid #b9c9dc;
    border-bottom: 0;
    border-radius: 4px 4px 0 0;
    background: linear-gradient(#dfe7f1 25px, #fff);
    font-weight: bold;
  }
  .formwrap {
    display: flex;
    height: 83px;
  }
  form {
    flex: 1;
    padding: 5px 16px 0 11px;
    overflow: hidden;
  }
  .formrow {
    display: grid;
    grid-template-columns: 69px 209px 73px 209px;
    align-items: center;
    height: 25px;
    padding-bottom: 6px;
  }
  .formrow + .formrow {
    height: 35px;
    padding-top: 8px;
    border-top: 1px solid #999;
  }
  .formrow .second {
    padding-left: 7px;
    white-space: nowrap;
  }
  .formrow input[type="text"], .combo {
    height: 19px;
    padding: 0 4px;
    border: 1px solid #a3abb8;
  }
  .combo {
    display: flex;
    position: relative;
    width: 203px;
    padding: 0;
  }
  .combo select {
    width: 100%;
    padding-left: 4px;
    background: linear-gradient(90deg, #fff 185px, #ececec 185px);
  }
  .combo .droparrow {
    position: absolute;
    right: 1px;
    top: 1px;
    pointer-events: none;
  }
  .check {
    display: flex;
    gap: 3px;
    align-items: center;
    grid-column: 3 / 5;
  }
  .check input {
    flex: none;
    width: 13px;
    height: 13px;
    border: 1px solid #8e8f8f;
    background: linear-gradient(135deg, #c9cdd3, #f4f4f4);
    box-shadow: inset 0 0 0 1px #f4f4f4;
  }
</style>
